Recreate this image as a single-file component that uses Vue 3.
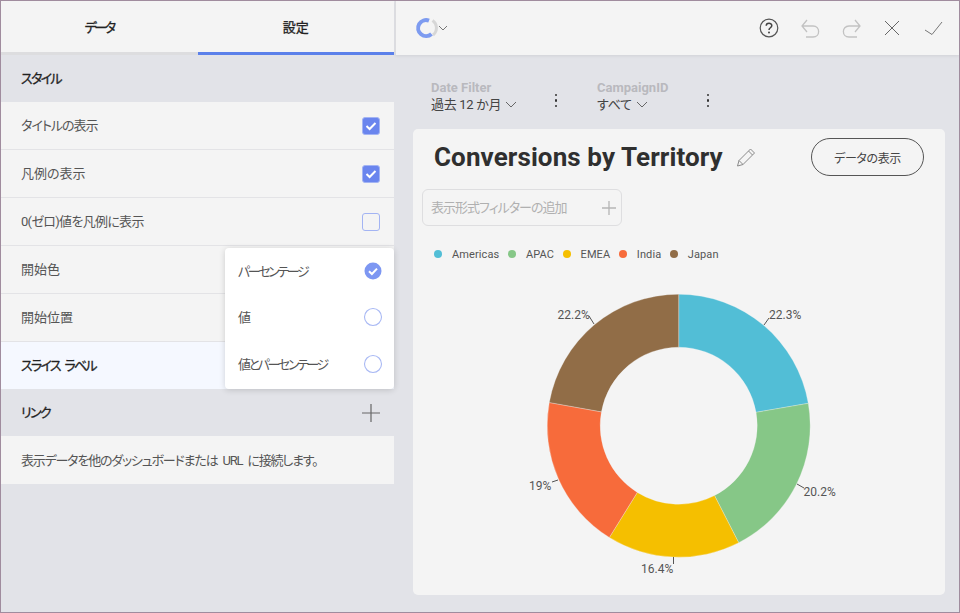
<script setup>
import { computed } from 'vue'

const rows = [
    { label: 'タイトルの表示', checked: true, track: 't10' },
    { label: '凡例の表示', checked: true },
    { label: '0(ゼロ)値を凡例に表示', checked: false, track: 't07' },
    { label: '開始色' },
    { label: '開始位置' }
]

const options = [
    { label: 'パーセンテージ', selected: true },
    { label: '値', selected: false },
    { label: '値とパーセンテージ', selected: false }
]

const filters = [
    { name: 'Date Filter', value: '過去 12 か月', width: 166 },
    { name: 'CampaignID', value: 'すべて', width: 152 }
]

// svg origin sits at x=413, y=280 of the page
const cx = 265.7
const cy = 145.7
const outer = 131.5
const inner = 78.5

const slices = [
    { name: 'Americas', value: 22.3, color: '#52bed6', label: '22.3%', tx: 356, ty: 39, line: 'M351 45 L356 38' },
    { name: 'APAC', value: 20.2, color: '#86c787', label: '20.2%', tx: 390.5, ty: 216, line: 'M384 204 L391 208' },
    { name: 'EMEA', value: 16.4, color: '#f5bf00', label: '16.4%', tx: 228, ty: 293, line: 'M260.5 277 L260.5 284' },
    { name: 'India', value: 19, color: '#f76b3b', label: '19%', tx: 116, ty: 210, line: 'M145 200 L139 202' },
    { name: 'Japan', value: 22.2, color: '#916d47', label: '22.2%', tx: 144.5, ty: 39, line: 'M181 44 L176 36' }
]

function point(radius, angle) {
    return [cx + radius * Math.sin(angle), cy - radius * Math.cos(angle)]
}

const arcs = computed(() => {
    const total = slices.reduce((sum, s) => sum + s.value, 0)
    let start = 0
    return slices.map(s => {
        const end = start + (s.value / total) * Math.PI * 2
        const a = point(outer, start)
        const b = point(outer, end)
        const c = point(inner, end)
        const d = point(inner, start)
        start = end
        return {
            ...s,
            d: `M${a[0]} ${a[1]} A${outer} ${outer} 0 0 1 ${b[0]} ${b[1]} L${c[0]} ${c[1]} A${inner} ${inner} 0 0 0 ${d[0]} ${d[1]} Z`
        }
    })
})
</script>

<template>
    <div class="app-frame">
        <!-- Settings panel -->
        <aside class="side-panel">
            <div class="tabs">
                <div class="tab t24">データ</div>
                <div class="tab active">設定</div>
            </div>

            <div class="section-title"><span class="t17">スタイル</span></div>
            <div v-for="row in rows" :key="row.label" class="row">
                <span class="row-text" :class="row.track">{{ row.label }}</span>
                <span v-if="row.checked === true" class="checkbox on">
                    <svg width="12" height="10" viewBox="0 0 12 10"><path d="M1.5 5 L4.6 8 L10.5 2" fill="none" stroke="#fff" stroke-width="2" /></svg>
                </span>
                <span v-else-if="row.checked === false" class="checkbox"></span>
            </div>
            <div class="row selected"><span class="row-text t17 spaced">スライス ラベル</span></div>

            <div class="section-title link-title">
                <span class="t17">リンク</span>
                <svg width="18" height="18" viewBox="0 0 18 18"><path d="M9 0 V18 M0 9 H18" stroke="#666" stroke-width="1.2" /></svg>
            </div>
            <div class="row description"><span class="row-text t12 spaced">表示データを他のダッシュボードまたは URL に接続します。</span></div>

            <!-- Slice label menu -->
            <div class="menu">
                <div v-for="option in options" :key="option.label" class="menu-item">
                    <span class="menu-text t24">{{ option.label }}</span>
                    <svg width="20" height="20" viewBox="0 0 20 20">
                        <template v-if="option.selected">
                            <circle cx="10" cy="10" r="8.5" fill="#7d97f2" />
                            <path d="M6 10.2 L8.9 13 L14 7.6" fill="none" stroke="#fff" stroke-width="2" />
                        </template>
                        <circle v-else cx="10" cy="10" r="8.5" fill="#fff" stroke="#a9b9f4" stroke-width="1.1" />
                    </svg>
                </div>
            </div>
        </aside>

        <main class="main">
            <!-- Toolbar -->
            <header class="toolbar">
                <div class="logo">
                    <svg width="40" height="24" viewBox="0 0 40 24">
                        <path d="M24.5 4.5 A9 9 0 0 1 25 19" fill="none" stroke="#d6d6d6" stroke-width="3" />
                        <path d="M21 4.6 A8 8 0 1 0 23.5 18" fill="none" stroke="#7d9bf0" stroke-width="4" />
                        <path d="M31 10 L35 14 L39 10" fill="none" stroke="#777" stroke-width="1" />
                    </svg>
                </div>
                <div class="tools">
                    <svg width="20" height="20" viewBox="0 0 20 20">
                        <circle cx="10" cy="10" r="8.8" fill="none" stroke="#555" stroke-width="1.2" />
                        <path d="M7.2 7.8 C7.2 4.4 12.8 4.4 12.8 7.6 C12.8 9.8 10 9.7 10 12" fill="none" stroke="#444" stroke-width="1.5" />
                        <circle cx="10" cy="14.6" r="1" fill="#444" />
                    </svg>
                    <svg width="20" height="20" viewBox="0 0 20 20">
                        <path d="M7 2 L2 8 L7 14 M2 8 H13 C20.5 8 20.5 19 13 19 H6" fill="none" stroke="#c2c2c2" stroke-width="1.3" />
                    </svg>
                    <svg width="20" height="20" viewBox="0 0 20 20">
                        <path d="M14 2 L19 8 L14 14 M19 8 H8 C0.5 8 0.5 19 8 19 H16" fill="none" stroke="#c2c2c2" stroke-width="1.3" />
                    </svg>
                    <svg width="20" height="20" viewBox="0 0 20 20">
                        <path d="M3 3 L17 17 M17 3 L3 17" fill="none" stroke="#666" stroke-width="1" />
                    </svg>
                    <svg width="20" height="20" viewBox="0 0 20 20">
                        <path d="M2 12 L9 16.5 L19 4" fill="none" stroke="#777" stroke-width="1" />
                    </svg>
                </div>
            </header>

            <!-- Dashboard filters -->
            <div class="filters">
                <div v-for="filter in filters" :key="filter.name" class="filter" :style="{ width: filter.width + 'px' }">
                    <div>
                        <div class="filter-name">{{ filter.name }}</div>
                        <div class="filter-value">
                            {{ filter.value }}
                            <svg width="12" height="8" viewBox="0 0 12 8"><path d="M1 1 L6 6 L11 1" fill="none" stroke="#666" stroke-width="1" /></svg>
                        </div>
                    </div>
                    <div class="dots"><i></i><i></i><i></i></div>
                </div>
            </div>

            <!-- Chart card -->
            <section class="card">
                <div class="card-head">
                    <h1 class="card-title">Conversions by Territory</h1>
                    <svg class="pencil" width="20" height="20" viewBox="0 0 20 20">
                        <path d="M1.5 19 L3 13.5 L14.5 2 L18.5 6 L7 17.5 Z M12.5 4 L16.5 8 M3 13.5 L7 17.5" fill="none" stroke="#8a8a8a" stroke-width="1" />
                    </svg>
                    <button class="data-btn">データの表示</button>
                </div>

                <div class="add-filter">
                    <span class="add-text t10">表示形式フィルターの追加</span>
                    <svg width="16" height="16" viewBox="0 0 16 16"><path d="M8 1 V15 M1 8 H15" stroke="#b5b5b5" stroke-width="1.3" /></svg>
                </div>

                <div class="legend">
                    <div v-for="slice in slices" :key="slice.name" class="legend-item">
                        <i class="legend-dot" :style="{ background: slice.color }"></i>
                        <span>{{ slice.name }}</span>
                    </div>
                </div>

                <svg class="donut" width="532" height="300" viewBox="0 0 532 300">
                    <path v-for="arc in arcs" :key="arc.name" :d="arc.d" :fill="arc.color" stroke="#f4f4f4" stroke-width="0.3" />
                    <g v-for="arc in arcs" :key="arc.label">
                        <path :d="arc.line" stroke="#555" stroke-width="1" fill="none" />
                        <text :x="arc.tx" :y="arc.ty" class="slice-label">{{ arc.label }}</text>
                    </g>
                </svg>
            </section>
        </main>
    </div>
</template>

<style scoped>
.app-frame {
    position: relative;
    display: flex;
    width: 960px;
    height: 613px;
    box-sizing: border-box;
    border: 1px solid #a08c9e;
    background: #e2e3e8;
    font-family: Roboto, "Noto Sans CJK JP", sans-serif;
    font-size: 13px;
    font-feature-settings: "palt";
    color: #555;
    overflow: hidden;
}

.t07 { letter-spacing: -0.7px; }
.t10 { letter-spacing: -1px; }
.t12 { letter-spacing: -1.2px; }
.t17 { letter-spacing: -1.7px; }
.t24 { letter-spacing: -2.4px; }
.spaced { word-spacing: 3px; }

.side-panel {
    position: relative;
    width: 393px;
    flex-shrink: 0;
}

.tabs {
    display: flex;
    height: 54px;
    background: #f4f4f4;
}

.tab {
    flex: 1;
    display: flex;
    align-items: center;
    justify-content: center;
    border-bottom: 3px solid #dddddf;
    color: #222;
    -webkit-text-stroke: 0.3px #222;
}

.tab.active {
    border-bottom-color: #5b80ea;
}

.section-title {
    height: 47px;
    padding: 0 20px;
    display: flex;
    align-items: center;
    justify-content: space-between;
    color: #222;
    -webkit-text-stroke: 0.3px #222;
}

.section-title span {
    margin-top: -2px;
}

.link-title {
    padding-right: 14px;
}

.row {
    height: 48px;
    box-sizing: border-box;
    padding: 0 14px 0 20px;
    display: flex;
    align-items: center;
    justify-content: space-between;
    background: #f4f4f4;
    border-bottom: 1px solid #e3e3e6;
}

.row-text {
    margin-top: -2px;
}

.row.selected {
    height: 47px;
    background: #f5f8ff;
    border-bottom: none;
    color: #222;
    -webkit-text-stroke: 0.3px #222;
}

.row.description {
    border-bottom: none;
}

.checkbox {
    width: 18px;
    height: 18px;
    box-sizing: border-box;
    border: 1px solid #a3b4f3;
    border-radius: 3px;
    display: flex;
    align-items: center;
    justify-content: center;
}

.checkbox.on {
    background: #6a85ee;
}

.menu {
    position: absolute;
    left: 224px;
    right: 0;
    top: 247px;
    height: 141px;
    padding: 0 11px 2px 13px;
    box-sizing: border-box;
    display: flex;
    flex-direction: column;
    justify-content: space-around;
    background: #fff;
    border-radius: 4px;
    box-shadow: 0 1px 6px rgba(0, 0, 0, 0.16);
}

.menu-item {
    display: flex;
    align-items: center;
    justify-content: space-between;
}

.menu-text {
    margin-top: -1px;
}

.main {
    flex: 1;
    min-width: 0;
    display: flex;
    flex-direction: column;
}

.toolbar {
    height: 54px;
    flex-shrink: 0;
    box-sizing: border-box;
    margin-left: 1px;
    border-left: 1px solid #dcdcdf;
    padding: 0 16px 0 12px;
    display: flex;
    align-items: center;
    justify-content: space-between;
    background: #f4f4f4;
    box-shadow: 0 1px 3px rgba(0, 0, 0, 0.08);
}

.logo {
    display: flex;
}

.tools {
    display: flex;
    gap: 21px;
}

.filters {
    display: flex;
    padding: 25px 0 0 37px;
    height: 74px;
    box-sizing: border-box;
}

.filter {
    display: flex;
    justify-content: space-between;
    align-items: flex-start;
    padding-right: 40px;
    box-sizing: border-box;
}

.filter-name {
    font-size: 13px;
    line-height: 15px;
    font-weight: 700;
    color: #b9b9be;
}

.filter-value {
    margin-top: 1px;
    font-size: 13px;
    line-height: 18px;
    color: #444;
    display: flex;
    align-items: center;
    gap: 4px;
    letter-spacing: -0.3px;
}

.dots {
    display: flex;
    flex-direction: column;
    gap: 3px;
    padding-top: 14px;
}

.dots i {
    width: 2.4px;
    height: 2.4px;
    background: #333;
    border-radius: 50%;
}

.card {
    margin: 0 14px 17px 19px;
    flex: 1;
    min-height: 0;
    border-radius: 5px;
    background: #f4f4f4;
}

.card-head {
    display: flex;
    align-items: center;
    height: 56px;
    padding: 0 21px;
}

.card-title {
    margin: 0;
    font-size: 26px;
    font-weight: 700;
    letter-spacing: 0.1px;
    color: #2f2f2f;
    font-family: Roboto, sans-serif;
}

.pencil {
    margin-left: 13px;
}

.data-btn {
    margin-left: auto;
    width: 113px;
    height: 38px;
    border: 1px solid #555;
    border-radius: 19px;
    background: transparent;
    font: inherit;
    font-size: 12px;
    letter-spacing: -0.4px;
    color: #444;
}

.add-filter {
    margin: 4px 0 0 9px;
    width: 200px;
    height: 37px;
    box-sizing: border-box;
    border: 1px solid #dedee0;
    border-radius: 6px;
    padding: 0 4px 0 8px;
    display: flex;
    align-items: center;
    justify-content: space-between;
    color: #b0b0b0;
}

.add-text {
    margin-top: -2px;
}

.legend {
    display: flex;
    padding: 20px 0 0 21px;
    height: 36px;
    box-sizing: border-box;
    font-size: 11px;
    line-height: 13px;
    letter-spacing: 0.1px;
    color: #555;
}

.legend-item {
    display: flex;
    align-items: center;
    gap: 10px;
    margin-right: 8.6px;
}

.legend-dot {
    width: 8px;
    height: 8px;
    border-radius: 50%;
}

.donut {
    display: block;
    margin-top: 18px;
}

.slice-label {
    font-size: 12px;
    fill: #555;
}
</style>
